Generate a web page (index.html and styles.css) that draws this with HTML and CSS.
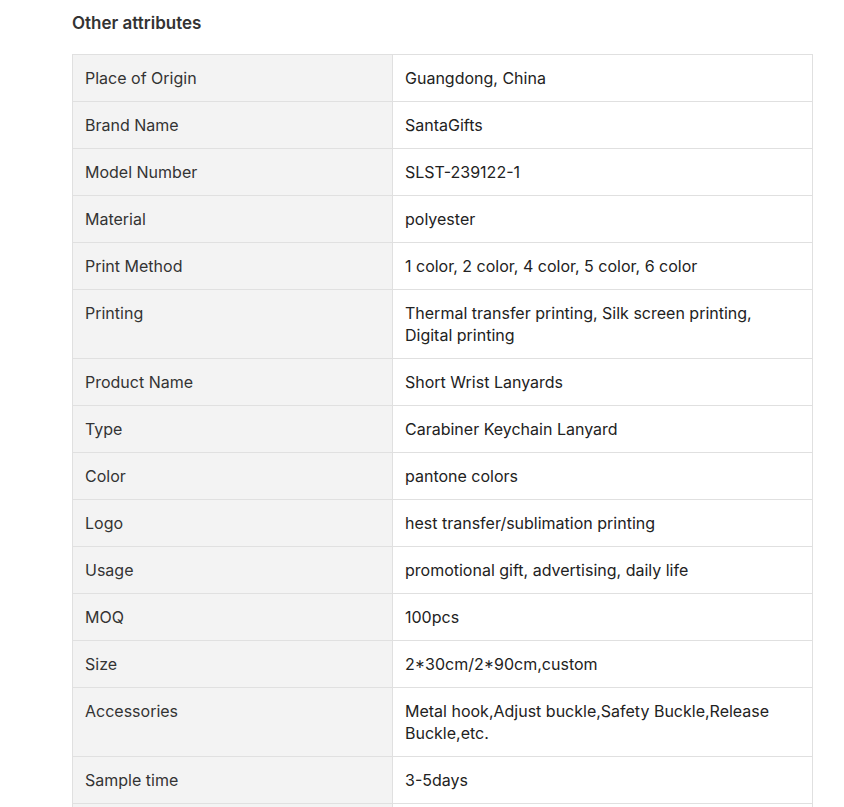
FILE: index.html
```html
<!DOCTYPE html>
<html>
<head>
<meta charset="utf-8">
<link rel="stylesheet" href="styles.css">
</head>
<body>
<div class="wrap">
  <h2 class="title">Other attributes</h2>
  <table class="attrs">
    <tr><td class="k">Place of Origin</td><td class="v">Guangdong, China</td></tr>
    <tr><td class="k">Brand Name</td><td class="v">SantaGifts</td></tr>
    <tr><td class="k">Model Number</td><td class="v">SLST-239122-1</td></tr>
    <tr><td class="k">Material</td><td class="v">polyester</td></tr>
    <tr><td class="k">Print Method</td><td class="v">1 color, 2 color, 4 color, 5 color, 6 color</td></tr>
    <tr><td class="k">Printing</td><td class="v">Thermal transfer printing, Silk screen printing, Digital printing</td></tr>
    <tr><td class="k">Product Name</td><td class="v">Short Wrist Lanyards</td></tr>
    <tr><td class="k">Type</td><td class="v">Carabiner Keychain Lanyard</td></tr>
    <tr><td class="k">Color</td><td class="v">pantone colors</td></tr>
    <tr><td class="k">Logo</td><td class="v">hest transfer/sublimation printing</td></tr>
    <tr><td class="k">Usage</td><td class="v">promotional gift, advertising, daily life</td></tr>
    <tr><td class="k">MOQ</td><td class="v">100pcs</td></tr>
    <tr><td class="k">Size</td><td class="v">2*30cm/2*90cm,custom</td></tr>
    <tr><td class="k">Accessories</td><td class="v">Metal hook,Adjust buckle,Safety Buckle,Release Buckle,etc.</td></tr>
    <tr><td class="k">Sample time</td><td class="v">3-5days</td></tr>
    <tr><td class="k">&nbsp;</td><td class="v">&nbsp;</td></tr>
  </table>
</div>
</body>
</html>
```
FILE: styles.css
```css
html, body {
  margin: 0;
  padding: 0;
  background: #fff;
}
body {
  font-family: Inter, "Noto Sans", sans-serif;
  color: #222;
}
.wrap {
  padding: 12px 0 0 72px;
}
.title {
  margin: 0 0 20px 0;
  font-size: 17px;
  line-height: 22px;
  font-weight: 600;
  color: #333;
}
.attrs {
  width: 741px;
  border-collapse: collapse;
  font-size: 16px;
  line-height: 22px;
}
.attrs td {
  border: 1px solid #e0e0e0;
  padding: 12px 12px;
  vertical-align: top;
}
.attrs .k {
  width: 295px;
  background: #f3f3f3;
  color: #333;
}
.attrs .v {
  color: #222;
}
```
